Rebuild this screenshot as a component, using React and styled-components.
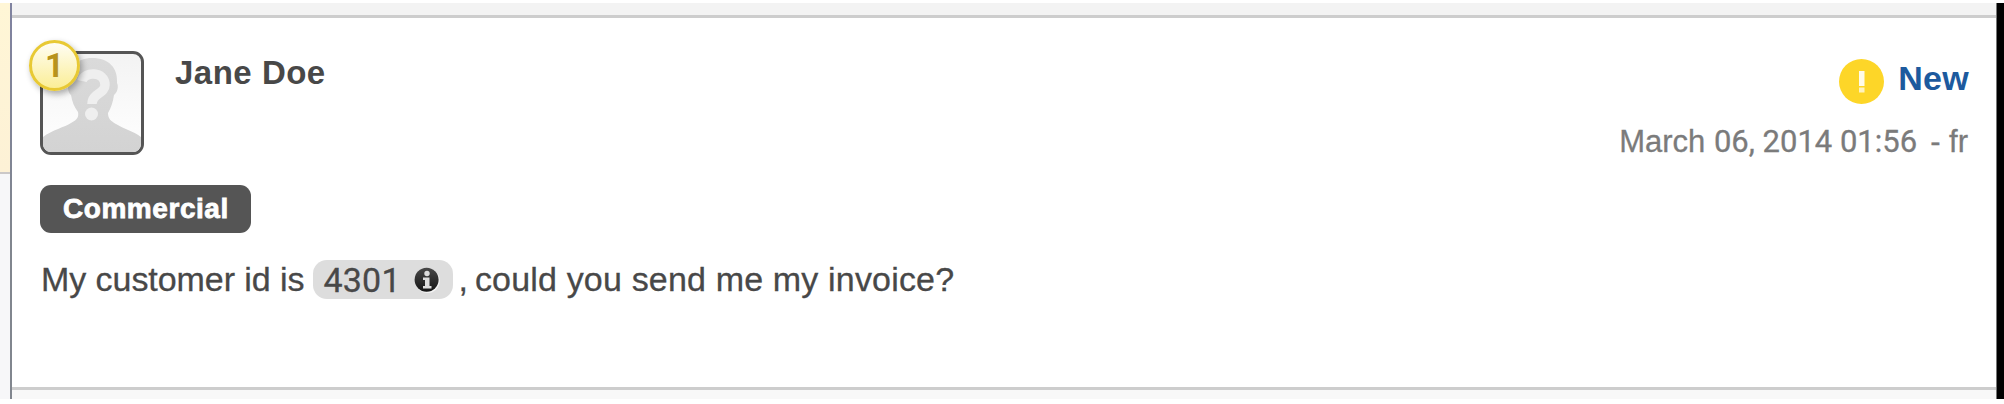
import React from "react";
import styled, { createGlobalStyle } from "styled-components";

const GlobalStyle = createGlobalStyle`
  * { box-sizing: border-box; }
  body {
    margin: 0;
    background: #fff;
    font-family: "Liberation Sans", Arial, Helvetica, sans-serif;
    color: #484848;
  }
`;

const Page = styled.div`
  display: flex;
  width: 2004px;
  height: 404px;
  padding: 3px 0 5px;
  overflow: hidden;
`;

const Sidebar = styled.aside`
  width: 10px;
  background: #f7f7f9;
`;

const SelectedItem = styled.div`
  height: 171px;
  background: linear-gradient(#fff6d6, #fdf1d6);
  border-bottom: 2px solid #cbc8c8;
`;

const Divider = styled.div`
  width: 2px;
  background: linear-gradient(#8083a0, #81868e 60%);
`;

const Main = styled.main`
  flex: 1;
  display: flex;
  flex-direction: column;
`;

const Strip = styled.div`
  height: ${(p) => p.$height}px;
  background: ${(p) => p.$tone};
`;

const Edge = styled.div`
  width: 8px;
  background: #000;
  border-left: 1px solid #777;
`;

const Message = styled.article`
  flex: 1;
  display: flex;
  flex-direction: column;
  align-items: flex-start;
  padding: 33px 27px 0 28px;
  border-top: 3px solid #cdcdcd;
  border-bottom: 3px solid #cdcdcd;
`;

const Header = styled.header`
  display: flex;
  align-items: flex-start;
  align-self: stretch;
  height: 134px;
`;

const Avatar = styled.div`
  position: relative;
  width: 104px;
  height: 104px;
  border: 3px solid #555;
  border-radius: 11px;
  background: linear-gradient(#f3f3f3, #fff);

  > svg { display: block; border-radius: 8px; }
`;

const Count = styled.span`
  position: absolute;
  left: -14px;
  top: -14px;
  width: 51px;
  height: 51px;
  border: 3px solid #e8c934;
  border-radius: 50%;
  background: linear-gradient(#fffdf4, #fbee96);
  box-shadow: 2px 3px 6px rgba(0, 0, 0, 0.32);
  color: #b8931c;
  font-family: Roboto, "Liberation Sans", sans-serif;
  font-size: 33px;
  font-weight: bold;
  line-height: 45px;
  text-align: center;
`;

const Author = styled.h1`
  flex: 1;
  margin: 3px 0 0 31px;
  font-size: 33px;
  line-height: 38px;
  letter-spacing: 0.5px;
`;

const Meta = styled.div`
  display: flex;
  flex-direction: column;
  align-items: flex-end;
  padding-top: 8px;
`;

const Status = styled.div`
  display: flex;
  align-items: flex-start;
  gap: 14px;
  height: 65px;
  color: #1d5a9e;
  font-size: 34px;
  font-weight: bold;
  line-height: 38px;
  letter-spacing: 0.3px;
`;

const Posted = styled.div`
  display: flex;
  gap: 13px;
  padding-right: 1px;
  color: #7b7b7b;
  font-size: 31px;
  line-height: 35px;
  -webkit-text-stroke: 0.3px #7b7b7b;
`;

const Digits = styled.span`
  font-family: Roboto, "Liberation Sans", sans-serif;
`;

const Tag = styled.span`
  height: 48px;
  padding: 0 22px 0 23px;
  border-radius: 11px;
  background: #555;
  color: #fff;
  font-size: 28px;
  font-weight: bold;
  line-height: 47px;
  letter-spacing: 0.55px;
  -webkit-text-stroke: 0.8px #fff;
`;

const Body = styled.p`
  display: flex;
  align-items: center;
  height: 40px;
  margin: 26px 0 0 1px;
  font-size: 34px;
  line-height: 40px;
  -webkit-text-stroke: 0.3px #484848;
`;

const Phrase = styled.span`
  margin-left: ${(p) => p.$indent}px;
  letter-spacing: ${(p) => p.$tracking}px;
`;

const Entity = styled.span`
  display: flex;
  align-items: center;
  justify-content: space-between;
  width: 140px;
  height: 39px;
  margin: 1px 0 0 9px;
  padding: 0 13px 0 10px;
  border-radius: 14px;
  background: #ddd;
  letter-spacing: 0.2px;
`;

const Silhouette = () => (
  <svg width="98" height="98" viewBox="0 0 98 98">
    <defs>
      <linearGradient id="person" x1="0" y1="0" x2="0" y2="1">
        <stop offset="0" stopColor="#dadada" />
        <stop offset="1" stopColor="#d3d3d3" />
      </linearGradient>
    </defs>
    <path
      d="M0 83C9 76 22 73 28 69C34 66 36 63 35 58C31 53 29 47 28 41C25 39 24 32 26 29C26 13 34 4 49 4C66 4 75 14 74 29C76 33 74 39 71 41C70 48 68 54 65 59C65 65 68 67 73 70C81 75 92 78 98 83V98H0Z"
      fill="url(#person)"
    />
    <path d="M39 27C41 17 62 17 62 31C62 40 49 39 49 50" fill="none" stroke="#efefef" strokeWidth="9.5" />
    <circle cx="48.5" cy="60" r="6.5" fill="#efefef" />
  </svg>
);

const AlertIcon = () => (
  <svg width="45" height="45" viewBox="0 0 45 45">
    <circle cx="22.5" cy="22.5" r="22.5" fill="#fdd628" />
    <rect x="20" y="12" width="5.5" height="15" fill="#fffbea" />
    <rect x="20" y="28.5" width="5.5" height="5" fill="#fff3c0" />
  </svg>
);

const InfoIcon = () => (
  <svg width="26" height="26" viewBox="0 0 26 26">
    <defs>
      <linearGradient id="info" x1="0" y1="0" x2="0" y2="1">
        <stop offset="0" stopColor="#484848" />
        <stop offset="1" stopColor="#151515" />
      </linearGradient>
    </defs>
    <circle cx="13.6" cy="13.8" r="12.2" fill="#f3f3f3" />
    <circle cx="12.6" cy="12.7" r="12" fill="url(#info)" />
    <circle cx="13" cy="6.5" r="2.7" fill="#ddd" />
    <path d="M9 10.5H15.5V19H17.5V21.5H9V19H11V13H9Z" fill="#ddd" />
  </svg>
);

export default function App() {
  return (
    <>
      <GlobalStyle />
      <Page>
        <Sidebar>
          <SelectedItem />
        </Sidebar>
        <Divider />
        <Main>
          <Strip $height={12} $tone="#f3f3f3" />
          <Message>
            <Header>
              <Avatar>
                <Silhouette />
                <Count>1</Count>
              </Avatar>
              <Author>Jane Doe</Author>
              <Meta>
                <Status>
                  <AlertIcon />
                  New
                </Status>
                <Posted>
                  <time>
                    March <Digits>06, 2014 01:56</Digits>
                  </time>
                  <span>- fr</span>
                </Posted>
              </Meta>
            </Header>
            <Tag>Commercial</Tag>
            <Body>
              <Phrase $indent={0} $tracking={-0.06}>My customer id is</Phrase>
              <Entity>
                <Digits>4301</Digits>
                <InfoIcon />
              </Entity>
              <Phrase $indent={5} $tracking={0}>,</Phrase>
              <Phrase $indent={7} $tracking={0.17}>could you send me my invoice?</Phrase>
            </Body>
          </Message>
          <Strip $height={9} $tone="#f8f8f8" />
        </Main>
        <Edge />
      </Page>
    </>
  );
}
